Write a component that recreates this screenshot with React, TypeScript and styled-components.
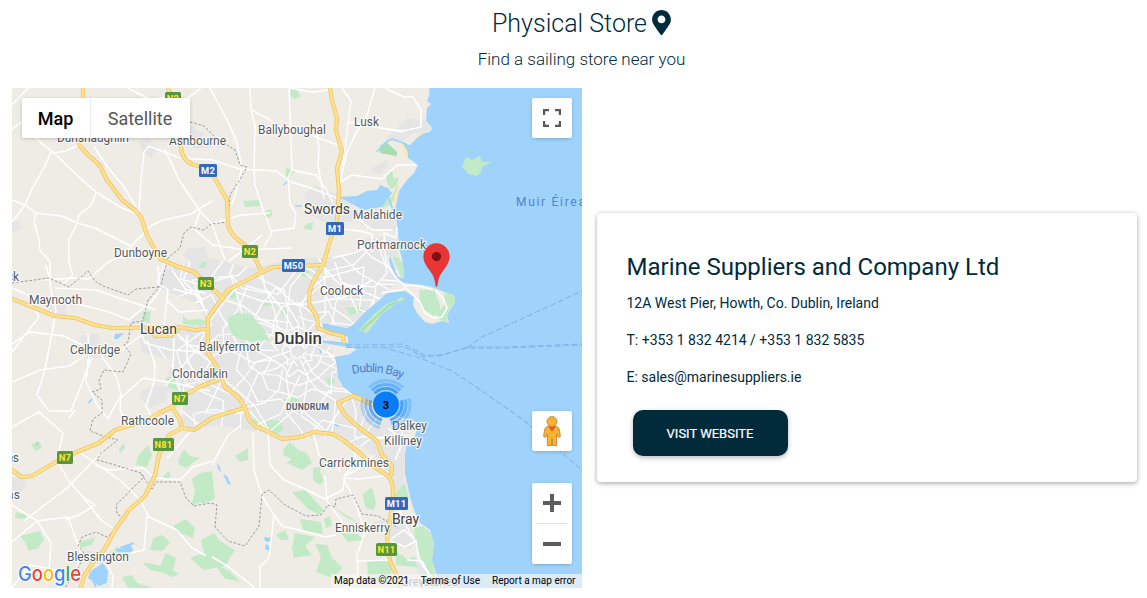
import React from "react";
import styled, { createGlobalStyle } from "styled-components";
import { FaMapMarkerAlt } from "react-icons/fa";

const GlobalStyle = createGlobalStyle`
  * { box-sizing: border-box; }
  body { margin: 0; background: #fff; font-family: Roboto, "Liberation Sans", sans-serif; color: #002b3c; }
  h1, h2, p { margin: 0; }
  button { font-family: inherit; border: 0; cursor: pointer; }
`;

const Page = styled.main`
  width: 1147px;
  height: 598px;
  overflow: hidden;
`;
const Header = styled.header`
  height: 88px;
  padding: 7px 0 0 16px;
  display: flex;
  flex-direction: column;
  align-items: center;
`;
const Title = styled.h1`
  display: flex;
  align-items: center;
  gap: 5px;
  height: 32px;
  font-size: 25px;
  font-weight: 300;
  white-space: nowrap;
  svg { width: 19px; height: 25px; margin-top: -1px; }
`;
const Subtitle = styled.p`
  margin-top: 9px;
  font-size: 17px;
  line-height: 22px;
  font-weight: 300;
`;
const Content = styled.section`
  display: flex;
  align-items: flex-start;
  gap: 15px;
  padding: 0 10px 0 12px;
`;
const MapFrame = styled.div`
  position: relative;
  flex: 0 0 570px;
  height: 500px;
  overflow: hidden;
`;
const MapSvg = styled.svg`
  display: block;
  width: 570px;
  height: 500px;
  font-family: Roboto, "Liberation Sans", sans-serif;
`;
const MapTypes = styled.div`
  position: absolute;
  left: 10px;
  top: 10px;
  display: flex;
  height: 40px;
  background: #fff;
  border-radius: 2px;
  box-shadow: 0 1px 4px -1px rgba(0, 0, 0, 0.3);
`;
const MapType = styled.button<{ $active?: boolean; $width: number }>`
  width: ${(p) => p.$width}px;
  padding: 0 1px 0 0;
  background: transparent;
  font-size: 18px;
  font-weight: ${(p) => (p.$active ? 500 : 400)};
  color: ${(p) => (p.$active ? "#000" : "#565656")};
  border-left: ${(p) => (p.$active ? "0" : "1px solid #ebebeb")};
`;
const Control = styled.button<{ $top: number; $height?: number }>`
  position: absolute;
  right: 10px;
  top: ${(p) => p.$top}px;
  width: 40px;
  height: ${(p) => p.$height ?? 40}px;
  padding: 0;
  display: flex;
  flex-direction: column;
  align-items: center;
  justify-content: center;
  background: #fff;
  border-radius: 2px;
  box-shadow: 0 1px 4px -1px rgba(0, 0, 0, 0.3);
  svg { display: block; }
`;
const Attribution = styled.div`
  position: absolute;
  right: 0;
  bottom: 0;
  height: 14px;
  width: 251px;
  padding: 0 6.5px 0 3px;
  display: flex;
  justify-content: space-between;
  background: rgba(245, 245, 245, 0.7);
  color: #000;
  font-size: 10px;
  line-height: 14px;
  white-space: nowrap;
`;
const Card = styled.article`
  flex: 0 0 540px;
  height: 269px;
  margin-top: 125px;
  padding: 38px 30px 0 29.5px;
  border-radius: 4px;
  background: #fff;
  box-shadow: 0 2px 5px rgba(0, 0, 0, 0.24), 0 0 4px rgba(0, 0, 0, 0.14);
`;
const StoreName = styled.h2`
  font-size: 24px;
  line-height: 32px;
  font-weight: 400;
  margin-bottom: 11px;
  white-space: nowrap;
`;
const Detail = styled.p`
  font-size: 14px;
  line-height: 18px;
  margin-bottom: 19px;
  white-space: nowrap;
`;
const VisitButton = styled.button`
  display: block;
  width: 155px;
  height: 46px;
  margin: 24px 0 0 6.5px;
  padding: 0 1px 0 0;
  border-radius: 10px;
  background: #012b3b;
  color: #fff;
  font-size: 13px;
  font-weight: 400;
  -webkit-text-stroke: 0.2px #fff;
  box-shadow: 0 2px 5px rgba(0, 0, 0, 0.26);
`;

const COAST =
  "M0 80H430L429 96L427 101L431 104L427 108L426 121L432 128L430 132L420 134L415 140L410 145L402 143L407 150L408 158L418 165L414 173L407 180L399 191L395 210L398 231L399 248L402 258L404 278L398 277L391 258L388 256L390 266L397 278L404 283L422 285L435 288L444 292L454 295L455 302L447 315L449 323L442 321L432 324L425 322L417 313L413 305L414 297L405 291L387 293L377 302L367 310L353 325L347 328L323 323L323 330L343 335L348 337L348 343L323 340L323 343L347 347L357 349L350 354L335 357L337 367L338 378L343 387L353 395L367 402L373 403L390 414L412 420L417 425L415 437L407 443L405 455L405 473L410 497L414 510L420 523L430 530L434 543L432 560L437 577L441 590H0Z";

const DUBLIN =
  "M165 270L210 258L250 268L300 258L335 257L356 251L360 240L398 235L398 280L387 293L350 327L323 330L335 357L338 378L353 395L373 403L417 425L405 443L404 480L409 500L397 494L385 465L360 446L330 436L300 440L282 441L260 432L215 425L194 431L182 424L180 405L165 386L172 360L142 352L140 338L165 330L205 322L200 305L163 290L158 280Z";

const TOWNS = [
  "M304 193L315 185L337 194L352 202L355 222L322 222L308 212Z",
  "M353 210L372 208L393 211L397 235L384 230L362 226Z",
  "M138 142L149 139L157 147L151 158L143 152Z",
  "M177 130L190 125L205 135L214 148L195 148L181 141Z",
  "M408 118L430 121L430 131L412 134L400 143L385 139L395 130Z",
  "M371 168L387 160L388 167L380 175L372 172Z",
  "M48 306L65 304L67 316L54 314Z",
  "M81 336L99 333L101 350L111 357L87 359L76 352Z",
  "M133 318L145 310L147 321L130 325Z",
  "M141 391L156 385L168 387L166 401L150 408L140 399Z",
  "M12 478L22 475L27 484L21 492L12 490Z",
  "M187 249L205 247L209 258L191 263L183 256Z",
  "M370 523L390 518L404 519L417 536L411 549L392 546L388 532Z",
  "M412 558L430 559L436 579L420 582Z",
  "M84 549L103 553L103 565L88 562Z",
  "M12 223L19 221L21 229L12 233Z",
];

const PARKS = [
  "M228 318L237 313L252 315L265 331L269 340L253 341L242 340L232 335L228 326Z",
  "M290 88L296 88L301 96L295 99L291 96Z",
  "M243 201L259 200L260 206L245 207Z",
  "M263 212L271 209L272 216L265 219Z",
  "M286 167L295 172L289 176L290 179L286 177Z",
  "M305 225L313 222L312 230L304 229Z",
  "M380 146L386 142L397 152L397 156L380 153Z",
  "M386 174L392 170L394 179L399 177L396 187L391 189L387 184Z",
  "M382 206L392 196L398 184L397 196L390 205L383 208Z",
  "M462 167L466 157L472 160L480 156L482 162L491 162L482 167L481 172L477 176L469 174Z",
  "M393 257L399 257L404 268L404 278L400 275Z",
  "M419 290L434 289L440 305L440 312L433 316L421 307Z",
  "M444 292L454 295L455 302L447 314L448 323L440 320L436 315L445 304Z",
  "M359 330L373 315L385 305L402 297L405 299L395 304L382 314L367 333Z",
  "M346 308L360 306L365 311L350 315Z",
  "M143 312L151 311L149 323L142 321Z",
  "M183 316L188 320L200 319L208 322L202 326L183 324Z",
  "M229 291L239 291L234 299L228 297Z",
  "M202 262L207 262L204 268L199 268Z",
  "M166 378L174 376L177 390L168 387Z",
  "M326 378L335 379L334 385L328 384Z",
  "M282 306L289 313L287 317L280 311Z",
  "M282 400L294 396L300 401L291 409L284 404Z",
  "M247 422L258 418L265 427L253 426Z",
  "M265 419L280 421L284 430L276 434L268 430Z",
  "M138 456L148 445L152 455L147 467L136 465Z",
  "M178 460L184 449L190 456L200 458L194 462L186 468L179 465Z",
  "M163 476L169 471L171 476L166 480Z",
  "M192 479L200 473L212 471L212 499L199 503L191 506L195 491Z",
  "M119 449L124 443L125 448L120 453Z",
  "M31 445L39 441L42 448L36 451Z",
  "M20 536L40 531L44 540L38 548L29 551L25 542Z",
  "M16 512L27 515L25 519L15 518Z",
  "M80 542L95 537L92 545L80 548Z",
  "M109 552L119 548L123 553L112 557Z",
  "M153 538L162 535L166 538L170 543L162 551L150 550Z",
  "M173 526L186 519L195 528L193 538L177 532Z",
  "M166 553L176 558L173 570L179 574L172 577L164 573L151 570L142 563L148 563L160 566Z",
  "M122 577L132 575L137 583L153 588H128Z",
  "M199 480L212 473L215 499L202 504Z",
  "M201 540L214 533L220 541L235 550L225 566L204 570L190 558L204 553Z",
  "M215 564L230 571L240 582L224 578Z",
  "M284 448L290 442L298 450L307 453L312 463L302 470L287 463L291 459L283 455Z",
  "M313 468L322 466L320 472L324 481L320 485L313 480Z",
  "M235 456L248 448L248 460L240 462Z",
  "M292 492L305 490L323 509L320 515L308 509Z",
  "M300 519L321 522L323 534L303 530Z",
  "M276 535L285 530L289 540L281 540Z",
  "M295 533L315 537L305 546L312 555L294 558L292 548Z",
  "M315 544L327 545L332 558L343 568L332 578L316 572L321 557Z",
  "M341 533L357 534L364 540L348 542Z",
  "M363 494L372 487L376 502L374 510L366 508L364 502Z",
  "M333 507L345 514L359 523L347 518Z",
  "M324 519L330 516L332 526L326 528Z",
  "M367 562L384 559L393 568L387 582L368 580Z",
  "M414 527L422 526L430 532L434 543L432 560L438 588H429L423 565L416 545Z",
  "M396 552L408 559L415 556L417 567L405 566L396 565Z",
  "M393 496L405 483L409 498L405 503Z",
  "M300 272L311 270L307 277L302 276Z",
  "M262 303L272 302L276 306L262 306Z",
];

const LAKES = [
  "M338 197L357 196L367 191L377 190L380 185L388 188L392 193L382 207L363 210L347 201Z",
  "M115 548L122 549L130 544L133 550L129 555L119 554Z",
  "M91 571L103 563L108 571L107 583L99 586L88 578Z",
  "M115 334L124 333L118 339L114 339Z",
  "M217 463L220 467L221 472L218 469Z",
  "M223 474L227 476L231 485L228 484Z",
  "M264 537L272 538L269 542L265 541Z",
  "M266 544L270 547L269 551L265 549Z",
  "M334 422L341 424L338 427L334 425Z",
  "M35 444L38 442L38 445Z",
  "M88 402L92 398L93 399L89 404Z",
];

const HIGHWAYS = [
  "M83 88V112Q76 128 77 138L80 146L89 156Q99 163 102 170L107 180L122 200L135 210L141 217L147 235L154 248L160 259L179 267L194 272L207 284L225 300",
  "M168 88L178 112Q182 130 181 146Q181 160 194 165L204 167L213 175L227 200L228 225Q230 235 245 245L255 258L262 273",
  "M330 88L332 101L337 118L336 131L342 151L337 168L339 191L337 221L330 241L323 265L313 282Q307 296 310 306L317 317L318 328L330 333L343 336L344 343",
  "M323 265L273 267L260 273L228 290L217 305L208 318V353L217 367L225 387L238 397L245 407L249 420L255 426L267 431L282 439L300 437L315 432L333 434L343 440L360 453L373 466L388 476Q394 482 393 498L390 521L387 538L390 561L398 578L401 590",
  "M10 298L55 316L75 318L95 325L112 328L179 327L195 330L207 329",
  "M10 469L22 477L32 476L59 460L79 451L99 443L115 430L135 424L148 420L159 413L172 407L180 398L199 387L220 379",
  "M172 407L180 420L182 428L194 430L212 418L227 413L245 408",
  "M182 428L169 435L159 455L155 475L145 496L129 510L115 530L104 550L94 561L84 576L80 590",
  "M373 405L363 400L353 396L338 403L345 415L357 426L377 441L382 455L392 466L391 476",
  "M146 328L156 336L170 336L179 330",
];

const ROADS = [
  // north west
  "M12 129L22 122L40 142L54 153L80 178L96 192L122 208L134 213",
  "M54 153L66 151L82 143M51 152L45 166L32 189L25 205L12 200M25 205L12 222",
  "M25 205L36 213L62 216L77 223L95 228L131 246L152 225L164 220L191 214L199 209L212 201",
  "M36 213L34 222L39 239L40 250L50 262L50 280",
  "M96 192L92 204L79 215L77 224L69 239V262L73 275L62 285",
  "M94 147L107 166L124 187L136 207",
  "M149 146L144 152L141 180L139 211M149 146L180 158L212 160L240 169L276 171L291 182L311 188L337 198",
  "M165 149L179 180L200 211L212 224L225 260M200 211L194 229L214 246",
  "M188 98L201 88",
  "M210 88L228 122L236 140L242 167L236 193L232 204",
  "M250 88L251 110L255 125L254 170L255 185L262 207L272 233L264 247",
  "M289 88L292 170L288 177L290 204L296 214L294 228L272 231",
  "M292 170L316 175L326 189L333 203M252 110L270 120L290 135",
  "M342 88L351 101L344 156L340 182M375 88L367 115L355 135L347 152L340 181",
  "M317 134L319 148L318 165L324 199M300 129L316 137L338 145",
  "M348 122L368 125L385 129L403 132M385 88L404 97L413 97L421 110V127L403 131L382 128",
  "M340 182L352 175L382 179L397 165L416 165",
  "M212 224L241 215L270 213M228 262L262 235M213 245L245 250L292 248",
  "M288 88L313 92L330 90M128 88L151 100L168 96",
  "M12 240L8 252M131 246L125 258M12 105L28 88",
  // west and south west
  "M12 344L30 332L64 336L92 350L112 356L142 335M52 296L56 311L45 370L37 395L49 411L71 411L92 357",
  "M12 382L40 370L69 366L89 353L88 334M89 353L86 382L97 405L109 420M101 355L117 378L121 395L108 418",
  "M12 288L28 295L39 317L12 352M52 296L49 277L46 265M60 300L90 307L109 312L129 320L143 308",
  "M55 288L96 290L125 300L156 310M42 280L72 278L89 279L108 262L130 253L160 250",
  "M12 427L39 412L63 433L57 460L68 480M69 418L75 410",
  "M68 480L83 497L95 505L79 515L65 520M24 521L67 488L103 451",
  "M76 450L121 481L140 500L149 517L177 530L191 547L206 556",
  "M83 497L101 520L116 530M12 505L37 521L68 517L80 550L77 570L83 588M12 542L24 532L37 521L51 543L49 570",
  "M104 554L130 553L144 550L147 516M95 465L109 470L143 468L155 478L180 480L193 467L212 461",
  "M167 459L188 434L194 430M104 557L113 576L112 588",
  "M121 398L143 378L174 383L210 391M121 395L120 410L128 424",
  "M147 340L155 365L154 382M174 338L173 367L180 391M187 335L187 360L201 383",
  "M154 382L146 406L155 423M190 345L211 350M140 330L145 343L171 350L204 352",
  "M164 325L168 290L157 282L165 263M173 289L196 295L205 310M167 300L179 312L208 310",
  "M172 270L186 290L206 293M190 262L183 281L203 300M145 310L160 290L158 266",
  // southern hills
  "M212 465L228 435L240 426M253 433L254 470L262 496L274 515L269 558L260 567V588",
  "M268 432L270 465L284 480L305 489L325 499L343 490L345 476L360 468L374 455",
  "M274 515L282 526L299 530L325 537L336 535M325 476L327 501L341 520L347 533",
  "M212 557L229 567L255 588M12 588L30 565L57 570",
  "M343 478L354 498L361 520L364 535L357 555L358 573L345 588M343 478L360 479L390 475",
  "M313 432L319 455L341 471M354 445L356 462L345 475",
  "M358 561L388 560M397 500L403 520L415 541M391 539L404 530L416 541L405 547L388 540",
  "M416 541L419 560L431 578L428 588M407 560L422 561L431 577M395 460L403 441L388 428",
  // coast north
  "M356 217L372 230L393 230M397 227L396 238L384 233L386 264L397 279L405 285L420 286L433 290",
  "M388 256L390 267L396 277L414 296L420 302L425 313L434 318L442 317L447 308L443 298L435 290",
  "M382 280L397 281M382 293L405 289M384 240L363 249L354 253L332 258",
  "M323 266L333 278L349 293L358 313M334 228L360 231L372 234L372 252",
  "M225 300L243 306L262 320L290 333M262 273L265 288L283 310L296 335M236 292L262 301L300 305L345 297L372 280M335 262L341 282L383 300",
];

// Inner-city street web: wobbling rings crossed by radial streets around the centre.
const CENTRE = { x: 298, y: 351 };
const ringPath = (radius: number, seed: number) => {
  const points = Array.from({ length: 20 }, (_, i) => {
    const a = (i / 20) * Math.PI * 2;
    const r = radius * (1 + 0.13 * Math.sin(i * 2.7 + seed) + 0.1 * Math.cos(i * 4.1 + seed * 2));
    return `${(CENTRE.x + Math.cos(a) * r * 1.08).toFixed(1)} ${(CENTRE.y + Math.sin(a) * r).toFixed(1)}`;
  });
  const gap = Math.floor(seed * 3) % 20;
  return `M${[...points.slice(gap), ...points.slice(0, gap)].join("L")}`;
};
const spokePath = (index: number) => {
  const a = (index / 23) * Math.PI * 2;
  const start = index % 2 ? 8 : 24;
  const points = [0, 1, 2, 3, 4, 5, 6, 7].map((k) => {
    const r = start + k * 19;
    const w = a + 0.17 * Math.sin(index * 1.9 + k * 1.7);
    return `${(CENTRE.x + Math.cos(w) * r).toFixed(1)} ${(CENTRE.y + Math.sin(w) * r).toFixed(1)}`;
  });
  return `M${points.join("L")}`;
};
const STREETS = [
  ...[7, 14, 23, 33, 45, 58, 72, 87, 103, 120].map((r, i) => ringPath(r, i * 1.7)),
  ...Array.from({ length: 23 }, (_, i) => spokePath(i)),
];

const BORDERS = [
  "M190 122L204 126L216 138L235 150L240 165L247 167L239 181L230 195L228 222L211 224L204 230L191 227L184 233L180 248L168 258L161 285L148 300L143 321L131 323L128 342L124 345L131 354L123 372L104 370L99 380L101 389L92 392L102 400L102 413L93 419L90 431L106 437L118 440L100 454L97 460L105 462L141 473L144 477L121 500L116 505L117 514L123 518L116 530L107 537L96 532L82 537L78 546L85 554L78 568L65 588",
  "M12 283L49 278L69 287L88 271L95 281L103 286L128 295L136 289L159 287",
  "M141 474L152 489L156 482L180 482L186 498L194 506L211 503L217 505L215 527L228 541L245 546L259 526L262 494L269 490L285 505L306 516L321 515L328 505L335 507L336 499L353 495L362 514L378 516L398 528",
];

const FERRIES = [
  "M346 345H372L404 344L424 355L440 356L467 347L507 347L582 344",
  "M346 347.5H374L404 346.5L424 357L445 354L467 348L507 348L582 345",
  "M467 348L480 338L582 291",
  "M382 347L420 358L452 371L482 391L522 419L582 470",
];

type LabelData = [text: string, x: number, y: number, width: number, size?: number];
const LABELS: LabelData[] = [
  ["Dunshaughlin", 57, 142, 72],
  ["Ashbourne", 169, 145, 57],
  ["Ballyboughal", 258, 134, 68],
  ["Lusk", 354, 126, 25],
  ["Swords", 304, 214, 46, 14],
  ["Malahide", 353, 219, 49],
  ["Portmarnock", 357, 249, 69],
  ["Dunboyne", 114, 257, 53],
  ["Maynooth", 29, 304, 53],
  ["ck", 7, 281, 12],
  ["Lucan", 140, 334, 37, 14],
  ["Celbridge", 70, 354, 50],
  ["Ballyfermot", 199, 351, 61],
  ["Clondalkin", 172, 378, 56],
  ["Coolock", 320, 295, 43],
  ["Rathcoole", 121, 425, 53],
  ["Dalkey", 392, 430, 35],
  ["Killiney", 384, 445, 38],
  ["Carrickmines", 319, 467, 70],
  ["Bray", 392, 524, 27, 14],
  ["Enniskerry", 335, 532, 55],
  ["Blessington", 67, 561, 62],
  ["as", 7, 462, 12],
  ["as", 7, 499, 13],
  ["Greystones", 401, 586, 57],
];

type ShieldData = [text: string, x: number, y: number, width: number];
const SHIELDS: ShieldData[] = [
  ["N2", 165, 92, 16],
  ["M2", 199, 164, 18],
  ["M1", 326, 222, 18],
  ["N2", 242, 245, 16],
  ["M50", 282, 259, 23],
  ["N3", 198, 277, 16],
  ["N7", 172, 392, 16],
  ["N81", 153, 438, 21],
  ["N7", 57, 451, 16],
  ["M11", 385, 497, 23],
  ["N11", 376, 543, 21],
];

const arc = (r: number, from: number) => {
  const point = (deg: number) => {
    const a = (deg * Math.PI) / 180;
    return `${(386 + r * Math.cos(a)).toFixed(2)} ${(404.5 + r * Math.sin(a)).toFixed(2)}`;
  };
  return `M${point(from)}A${r} ${r} 0 0 1 ${point(from + 90)}`;
};

const Label = ({ data: [text, x, y, width, size = 12] }: { data: LabelData }) => (
  <text
    x={x}
    y={y}
    fontSize={size}
    textLength={width}
    fill={size > 12 ? "#3f3f3f" : "#54585c"}
    stroke="#fff"
    strokeOpacity=".75"
    strokeWidth="2.4"
    strokeLinejoin="round"
    paintOrder="stroke"
  >
    {text}
  </text>
);

const Shield = ({ data: [text, x, y, width] }: { data: ShieldData }) => {
  const motorway = text.startsWith("M");
  return (
    <g>
      <rect x={x} y={y} width={width} height="13" rx="1.5" fill={motorway ? "#3269bd" : "#579640"} />
      <text
        x={x + width / 2}
        y={y + 10}
        textAnchor="middle"
        fontSize="9.3"
        fontWeight="700"
        letterSpacing=".2"
        fill={motorway ? "#fff" : "#ffe633"}
      >
        {text}
      </text>
    </g>
  );
};

const StoreMap = () => (
  <MapSvg viewBox="12 88 570 500" role="img" aria-label="Map of Dublin">
    <defs>
      <clipPath id="land"><path d={COAST} /></clipPath>
      <clipPath id="city"><path d={DUBLIN} /></clipPath>
      <path id="bay" d="M352.5 374Q378 368 406 380" />
    </defs>
    <rect x="12" y="88" width="570" height="500" fill="#9fd3fb" />
    <path d={COAST} fill="#efece6" />
    <g clipPath="url(#land)" fill="#e5e5e5">
      <path d={DUBLIN} />
      {TOWNS.map((d) => <path key={d} d={d} />)}
    </g>
    <g fill="#c3eac7">{PARKS.map((d) => <path key={d} d={d} />)}</g>
    <path d="M380 146L386 142L397 152L397 156L380 153Z" fill="#a8ddb0" />
    <path d="M362 330L388 306L398 301" fill="none" stroke="#a5dcae" strokeWidth="2" />
    <g fill="#9fd3fb">{LAKES.map((d) => <path key={d} d={d} />)}</g>
    <g fill="none" stroke="#9fd3fb">
      <path d="M377 152L386 142L392 139L406 144M388 196L393 210" strokeWidth="1.8" />
      <path d="M283 185L289 181M322 341L290 343M318 345L323 357M295 206H302" strokeWidth="1.3" />
      <path d="M96 587L90 574M120 548L134 543" strokeWidth="2" />
    </g>
    <path d="M402 143L407 150L408 159L405 157L402 149ZM399 185L397 198L394 209L394 196ZM408 145L420 134L424 133L414 140Z" fill="#fbe8b4" />
    <g clipPath="url(#land)" fill="none" stroke="#fff" strokeLinejoin="round">
      <g clipPath="url(#city)" strokeWidth="1.25">
        {STREETS.map((d) => <path key={d} d={d} />)}
      </g>
      <g strokeWidth="1.5">{ROADS.map((d) => <path key={d} d={d} />)}</g>
    </g>
    <path d={PARKS[0]} fill="#c3eac7" />
    <g fill="none" stroke="#8e9092" strokeWidth=".9" strokeDasharray="2.6 1.8">
      {BORDERS.map((d) => <path key={d} d={d} />)}
    </g>
    <g fill="none" stroke="#efc266" strokeWidth="4.2" strokeLinejoin="round">
      {HIGHWAYS.map((d) => <path key={d} d={d} />)}
    </g>
    <g fill="none" stroke="#fee18c" strokeWidth="2.7" strokeLinejoin="round">
      {HIGHWAYS.map((d) => <path key={d} d={d} />)}
    </g>
    <g fill="none" stroke="#87b4ec" strokeWidth="1.1" strokeDasharray="6 2.5">
      {FERRIES.map((d) => <path key={d} d={d} />)}
    </g>
    {LABELS.map((data) => <Label key={data[0] + data[2]} data={data} />)}
    <text x="274" y="344" fontSize="17" fontWeight="500" textLength="48" fill="#3c3c3c" stroke="#fff" strokeOpacity=".75" strokeWidth="2.6" paintOrder="stroke">Dublin</text>
    <text x="286" y="410" fontSize="8.8" fontWeight="700" textLength="43" fill="#56606d" stroke="#fff" strokeOpacity=".7" strokeWidth="2" paintOrder="stroke">DUNDRUM</text>
    <text fontSize="12" fill="#507fc6"><textPath href="#bay" textLength="51">Dublin Bay</textPath></text>
    <text x="516" y="206" fontSize="12" letterSpacing="1.7" fill="#5581ca">Muir Éireann</text>
    {SHIELDS.map((data) => <Shield key={data[0] + data[1]} data={data} />)}
    <g fill="none" stroke="#0a7cf8" strokeWidth="3">
      {[-135, -15, 105].map((from) => (
        <React.Fragment key={from}>
          <path d={arc(16, from)} opacity=".6" />
          <path d={arc(20, from)} opacity=".4" />
          <path d={arc(24, from)} opacity=".22" />
        </React.Fragment>
      ))}
    </g>
    <circle cx="386" cy="404.5" r="13" fill="#0a7cf8" />
    <text x="386" y="408.5" textAnchor="middle" fontSize="11" fontWeight="700" fill="#000">3</text>
    <path d="M436.5 286.5C435.5 286.5 435.6 279.8 433.2 275.2C430.2 269.5 423.7 264.2 423.7 256.4A12.8 12.8 0 0 1 449.3 256.4C449.3 264.2 442.8 269.5 439.8 275.2C437.4 279.8 437.5 286.5 436.5 286.5Z" fill="#ea3535" stroke="#d42b28" strokeWidth=".6" />
    <circle cx="436.5" cy="256.6" r="4.6" fill="#7d1015" />
    <text x="18" y="580.5" fontFamily="Inter, Roboto, sans-serif" fontSize="20.5" fontWeight="500" textLength="63" lengthAdjust="spacingAndGlyphs" stroke="#fff" strokeWidth="2" strokeLinejoin="round" paintOrder="stroke">
      <tspan fill="#4285f4">G</tspan><tspan fill="#ea4335">o</tspan><tspan fill="#fbbc04">o</tspan><tspan fill="#4285f4">g</tspan><tspan fill="#34a853">l</tspan><tspan fill="#ea4335">e</tspan>
    </text>
  </MapSvg>
);

const Pegman = () => (
  <svg width="20" height="32" viewBox="0 0 20 32">
    <path d="M5.5 11.5Q2.8 12 2.4 16L1.6 21.5L3.6 22.5L5.4 19V30.5H9.4L10 24L10.6 30.5H14.6V19L16.4 22.5L18.4 21.5L17.6 16Q17.2 12 14.5 11.5Z" fill="#fbb22e" stroke="#a87f3a" strokeWidth=".8" strokeLinejoin="round" />
    <path d="M6 11.6L10 16.8L14 11.6Z" fill="#e3573b" />
    <circle cx="10" cy="6.6" r="5" fill="#fbb22e" stroke="#a87f3a" strokeWidth=".8" />
    <path d="M7 10.6Q10 12.6 13 10.6" stroke="#d98f25" fill="none" />
  </svg>
);

export default function App() {
  return (
    <Page>
      <GlobalStyle />
      <Header>
        <Title>Physical Store <FaMapMarkerAlt /></Title>
        <Subtitle>Find a sailing store near you</Subtitle>
      </Header>
      <Content>
        <MapFrame>
          <StoreMap />
          <MapTypes>
            <MapType $active $width={68}>Map</MapType>
            <MapType $width={100}>Satellite</MapType>
          </MapTypes>
          <Control $top={10} aria-label="Toggle fullscreen">
            <svg width="18" height="18" viewBox="0 0 18 18" fill="none" stroke="#595959" strokeWidth="2.2">
              <path d="M1.1 6V1.1H6M12 1.1H16.9V6M16.9 12V16.9H12M6 16.9H1.1V12" />
            </svg>
          </Control>
          <Control $top={323} aria-label="Street View"><Pegman /></Control>
          <Control $top={395} $height={81} aria-label="Zoom">
            <svg width="40" height="81" viewBox="0 0 40 81">
              <path d="M11 20H29M20 11V29M11 61H29" stroke="#5c5c5c" strokeWidth="4" />
              <path d="M5 40.5H35" stroke="#e0e0e0" />
            </svg>
          </Control>
          <Attribution>
            <span>Map data ©2021</span>
            <span>Terms of Use</span>
            <span>Report a map error</span>
          </Attribution>
        </MapFrame>
        <Card>
          <StoreName>Marine Suppliers and Company Ltd</StoreName>
          <Detail>12A West Pier, Howth, Co. Dublin, Ireland</Detail>
          <Detail>T: +353 1 832 4214 / +353 1 832 5835</Detail>
          <Detail>E: sales@marinesuppliers.ie</Detail>
          <VisitButton>VISIT WEBSITE</VisitButton>
        </Card>
      </Content>
    </Page>
  );
}
